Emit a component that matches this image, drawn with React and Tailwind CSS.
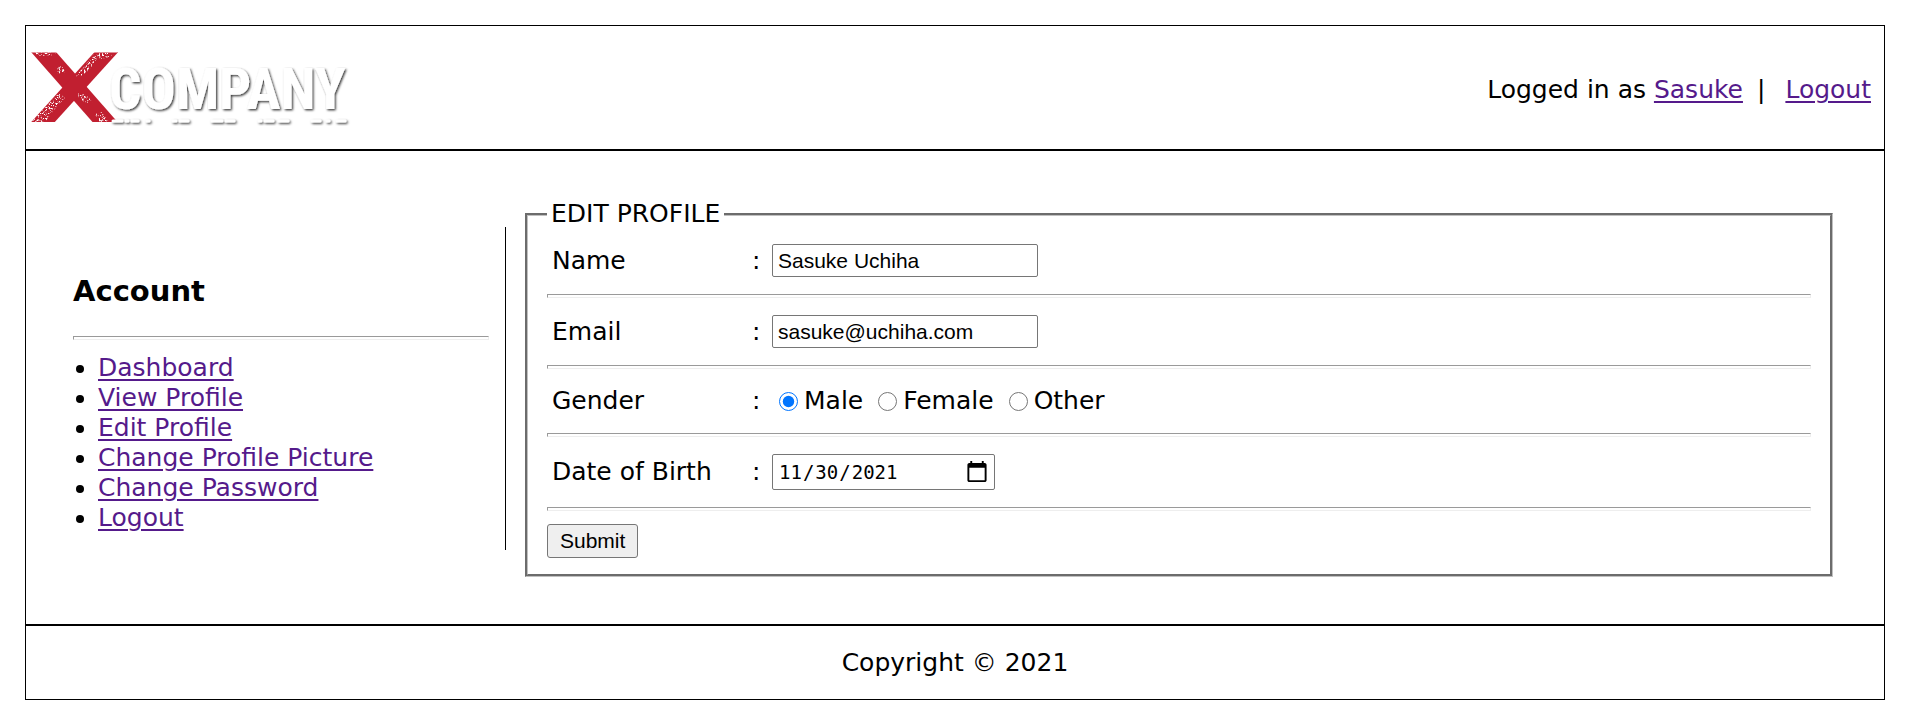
const navItems = [
  'Dashboard',
  'View Profile',
  'Edit Profile',
  'Change Profile Picture',
  'Change Password',
  'Logout',
];

const genders = ['Male', 'Female', 'Other'];

const linkClass = 'text-[#551a8b] underline decoration-2 underline-offset-[3px]';
const fieldClass =
  'rounded-[2px] border border-[#767676] bg-white px-[5px] text-black';

function Rule() {
  return (
    <hr className="h-1 border border-[#eeeeee] border-t-[#9a9a9a] border-l-[#9a9a9a]" />
  );
}

function Row({ label, htmlFor, children }) {
  return (
    <div className="flex items-center py-[17px] pl-[5px]">
      {htmlFor ? (
        <label htmlFor={htmlFor} className="w-[200px] shrink-0">
          {label}
        </label>
      ) : (
        <span id="gender-label" className="w-[200px] shrink-0">
          {label}
        </span>
      )}
      <span className="w-5 shrink-0">:</span>
      {children}
    </div>
  );
}

function Logo() {
  return (
    <svg width="326" height="76" viewBox="0 0 326 76" role="img" aria-label="X Company">
      <defs>
        <filter id="grain" x="0" y="0" width="1" height="1">
          <feTurbulence type="fractalNoise" baseFrequency="0.6" numOctaves="2" seed="7" />
          <feColorMatrix values="0 0 0 0 1  0 0 0 0 1  0 0 0 0 1  0 5 0 0 -2.5" />
          <feComposite operator="in" in2="SourceGraphic" />
        </filter>
        <filter id="letter-shadow" x="-5%" y="-10%" width="115%" height="130%">
          <feDropShadow dx="1.3" dy="1.3" stdDeviation="0.8" floodColor="#000" floodOpacity="0.8" />
        </filter>
        <clipPath id="mark">
          <rect x="0" y="2.5" width="87" height="69.5" />
        </clipPath>
      </defs>
      <g clipPath="url(#mark)">
        <path d="M4.2 -7.5 L82.8 82" stroke="#c11f30" strokeWidth="18.8" />
        <path d="M84 -7.5 L3 82" stroke="#c11f30" strokeWidth="17.5" />
        <g filter="url(#grain)">
          <path d="M45 26 L64 3 H84 L78 7 L66 10 L56 22 L48 27 Z M0 72 L28 43 L34 48 L26 56 L14 72 Z M47 43 L55 44 L62 52 L56 53 L48 49 Z M64 64 L70 61 L78 72 H68 Z M2 2 H24 L26 5 L8 6 Z M24 18 L31 16 L34 22 L27 24 Z" />
        </g>
      </g>
      <g filter="url(#letter-shadow)" fill="#fff">
        <text
          x="78"
          y="59"
          fontSize="57"
          fontWeight="700"
          fontFamily="'Roboto Condensed', Roboto, sans-serif"
        >
          COMPANY
        </text>
        <path
          d="M82 71h9M95 71h2M101 71h6M116 71h2M142 71h3M149 71h8M181 71h10M195 71h8M228 71h2M234 71h8M248 71h9M281 71h8M296 71h2M306 71h8"
          stroke="#fff"
          strokeWidth="3"
          strokeLinecap="round"
        />
      </g>
    </svg>
  );
}

export default function App() {
  return (
    <div className="bg-white p-[25px] font-['DejaVu_Sans',sans-serif] text-[25px] leading-[30px] text-black">
      <div className="border border-black">
        <header className="flex items-center justify-between border-b-2 border-black pb-[23px] pl-[5px] pr-[13px] pt-6">
          <Logo />
          <div className="flex items-center pt-1">
            <span className="whitespace-pre">Logged in as </span>
            <a href="#profile" className={linkClass}>
              Sasuke
            </a>
            <span className="ml-[14px] mr-5">|</span>
            <a href="#logout" className={linkClass}>
              Logout
            </a>
          </div>
        </header>

        <main className="grid grid-cols-[433fr_1308fr] items-center gap-x-[19px] border-b-2 border-black pb-[47px] pl-[47px] pr-[51px] pt-12">
          <nav className="border-r border-black pb-[17px] pr-4 pt-[46px]">
            <h3 className="mb-[27px] text-[29px] font-bold leading-9">Account</h3>
            <Rule />
            <ul className="mt-[13px] list-disc pl-[25px]">
              {navItems.map((item) => (
                <li key={item}>
                  <a href="#nav" className={linkClass}>
                    {item}
                  </a>
                </li>
              ))}
            </ul>
          </nav>

          <form>
            <fieldset className="border-[3px] border-[#c0c0c0] px-[19px] pb-4 [border-style:groove]">
              <legend className="px-1">EDIT PROFILE</legend>
              <div className="-mt-[2px]">
                <Row label="Name" htmlFor="name">
                  <input
                    id="name"
                    type="text"
                    defaultValue="Sasuke Uchiha"
                    className={`${fieldClass} h-[33px] w-[266px] font-['Liberation_Sans',sans-serif] text-[21px]`}
                  />
                </Row>
              </div>
              <Rule />
              <Row label="Email" htmlFor="email">
                <input
                  id="email"
                  type="email"
                  defaultValue="sasuke@uchiha.com"
                  className={`${fieldClass} h-[33px] w-[266px] font-['Liberation_Sans',sans-serif] text-[21px]`}
                />
              </Row>
              <Rule />
              <Row label="Gender">
                <div role="radiogroup" aria-labelledby="gender-label" className="flex gap-[15px] pl-[7px]">
                  {genders.map((gender) => (
                    <label key={gender} className="flex items-center gap-[6px]">
                      <input
                        type="radio"
                        name="gender"
                        defaultChecked={gender === 'Male'}
                        className="size-[19px]"
                      />
                      {gender}
                    </label>
                  ))}
                </div>
              </Row>
              <Rule />
              <Row label="Date of Birth" htmlFor="dob">
                <input
                  id="dob"
                  type="date"
                  defaultValue="2021-11-30"
                  className={`${fieldClass} h-9 w-[223px] font-['DejaVu_Sans_Mono',monospace] text-[19px] [&::-webkit-calendar-picker-indicator]:size-6 [&::-webkit-calendar-picker-indicator]:p-0`}
                />
              </Row>
              <Rule />
              <button
                type="submit"
                className="mt-[13px] block h-[34px] rounded-[3px] border border-[#767676] bg-[#efefef] px-3 font-['Liberation_Sans',sans-serif] text-[21px]"
              >
                Submit
              </button>
            </fieldset>
          </form>
        </main>

        <footer className="pb-[21px] pt-[22px] text-center">Copyright © 2021</footer>
      </div>
    </div>
  );
}
